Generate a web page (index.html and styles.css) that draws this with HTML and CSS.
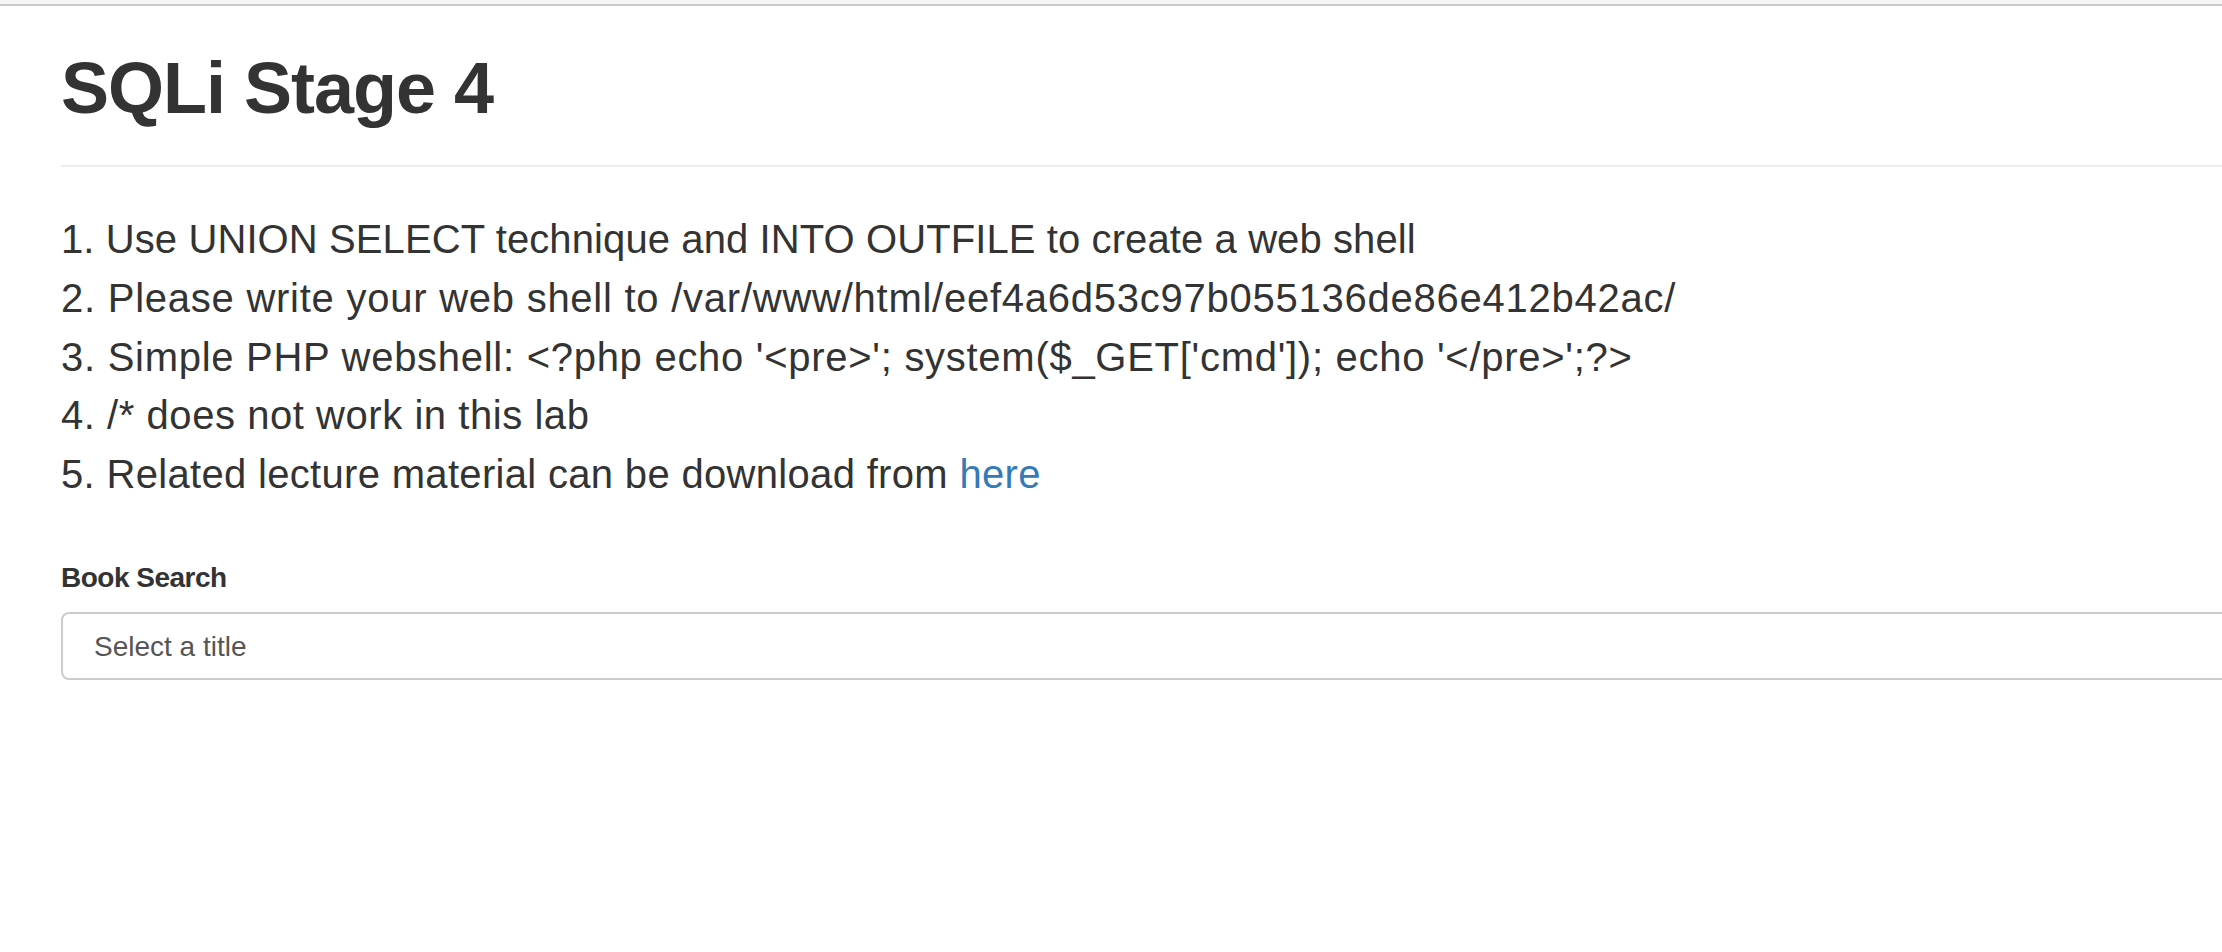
FILE: index.html
```html
<!DOCTYPE html>
<html lang="en">
<head>
<meta charset="utf-8">
<title>SQLi Stage 4</title>
<link rel="stylesheet" href="styles.css">
</head>
<body>
<div class="topbar"></div>
<div class="container">
  <div class="page-header">
    <h1>SQLi Stage 4</h1>
  </div>
  <div class="lead">
    <div class="step step-1">1. Use UNION SELECT technique and INTO OUTFILE to create a web shell</div>
    <div class="step step-2">2. Please write your web shell to /var/www/html/eef4a6d53c97b055136de86e412b42ac/</div>
    <div class="step step-3">3. Simple PHP webshell: &lt;?php echo '&lt;pre&gt;'; system($_GET['cmd']); echo '&lt;/pre&gt;';?&gt;</div>
    <div class="step step-4">4. /* does not work in this lab</div>
    <div class="step step-5">5. Related lecture material can be download from <a href="#">here</a></div>
  </div>
  <div class="form-group">
    <label class="form-label">Book Search</label>
    <div class="select-box">Select a title</div>
  </div>
</div>
</body>
</html>
```
FILE: styles.css
```css
html, body {
  margin: 0;
  padding: 0;
  background: #fff;
}
body {
  font-family: "Liberation Sans", Arial, sans-serif;
  color: #333;
  width: 2222px;
  height: 952px;
  overflow: hidden;
}
.topbar {
  height: 4px;
  background: #f5f5f7;
  border-bottom: 2px solid #cbcbcb;
}
.container {
  padding-left: 61px;
  margin-right: -160px;
}
.page-header {
  margin-top: 42px;
  padding-bottom: 17px;
  border-bottom: 2px solid #eee;
}
.page-header h1 {
  margin: 0 0 20px;
  font-size: 72px;
  line-height: 80px;
  font-weight: 700;
  letter-spacing: -1px;
}
.lead {
  margin-top: 43px;
  font-size: 40px;
  line-height: 58.8px;
}
.step-1 { letter-spacing: 0.1px; }
.step-2 { letter-spacing: 0.75px; }
.step-3 { letter-spacing: 0.72px; }
.step-4 { letter-spacing: 0.55px; }
.step-5 { letter-spacing: 0.32px; }
.lead a {
  color: #337ab7;
  text-decoration: none;
}
.form-group {
  margin-top: 54px;
}
.form-label {
  display: block;
  font-size: 28px;
  font-weight: 700;
  line-height: 40px;
  letter-spacing: -0.5px;
  margin-bottom: 14px;
}
.select-box {
  height: 64px;
  border: 2px solid #ccc;
  border-radius: 8px;
  line-height: 65px;
  padding-left: 31px;
  font-size: 28px;
  color: #555;
}
```
